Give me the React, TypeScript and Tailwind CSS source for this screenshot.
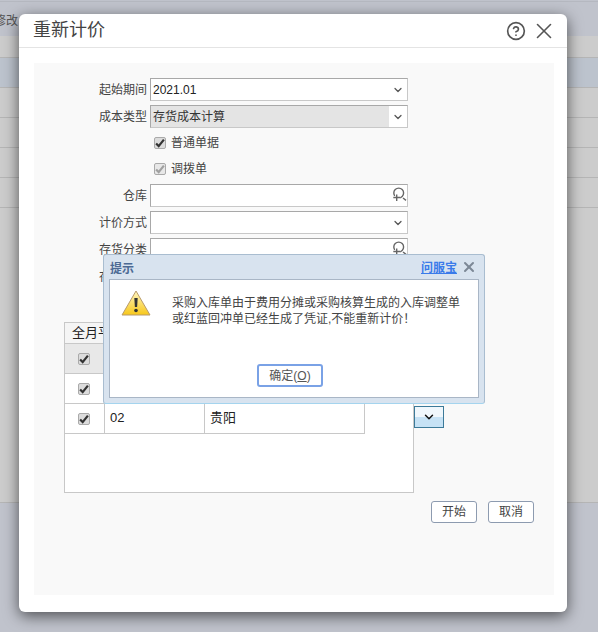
import { HelpCircle, X, ChevronDown } from 'lucide-react'

const cjk = { fontFamily: '"Liberation Sans", "Noto Sans CJK SC", sans-serif' }

const BgRow = ({ className }: { className: string }) => <div className={`border-b border-[#b5b5b5] ${className}`} />

const Chevron = () => <ChevronDown size={12} strokeWidth={2.5} className="text-[#555]" />

const SearchIcon = () => (
  <svg width="16" height="16" viewBox="0 0 16 16" fill="none" stroke="#666" strokeWidth="1.4" className="mt-[-2px]">
    <circle cx="7.7" cy="6" r="4.9" />
    <path d="M12 11l3 2.4" />
    <path d="M5.7 7v7M2.3 10.5h6.8" stroke="#fff" strokeWidth="3" />
    <path d="M5.7 7.5v6.5M2.3 10.5h6.8" />
  </svg>
)

const Tick = ({ disabled }: { disabled?: boolean }) => (
  <span className={`flex h-[12px] w-[12px] items-center justify-center rounded-[2px] border border-[#aaa] ${disabled ? 'bg-[#e8e8e8]' : 'bg-[#dcdcdc]'}`}>
    <svg width="10" height="10" viewBox="0 0 9 9" fill="none" stroke={disabled ? '#a0a0a0' : '#333'} strokeWidth="2">
      <path d="M1 5l2.3 2.3L8 1.5" />
    </svg>
  </span>
)

const Field = ({ label, children }: { label: string; children?: React.ReactNode }) => (
  <div className="flex h-[23px] items-center">
    <div className="w-[113px] pr-[3px] text-right text-[12px] text-[#444]">{label}</div>
    <div className="flex h-[23px] w-[258px] items-center justify-end border border-[#c8c8c8] border-t-[#a8a8a8] border-l-[#a8a8a8] bg-white">
      {children}
    </div>
  </div>
)

const TableRow = ({ code, name, head }: { code?: string; name?: string; head?: boolean }) => (
  <div className={`flex h-[30px] w-[300px] border-b border-[#c8c8c8] ${head ? 'bg-[#e8e8e8]' : 'bg-white'}`}>
    <div className="flex w-[40px] items-center justify-center border-r border-[#c8c8c8] pr-[1px]"><Tick /></div>
    <div className="flex w-[100px] items-center border-r border-[#c8c8c8] pb-[2px] pl-[5px] text-[13px] text-[#222]">{code}</div>
    <div className="flex w-[160px] items-center border-r border-[#c8c8c8] pb-[2px] pl-[5px] text-[13px] text-[#222]">{name}</div>
  </div>
)

export default function App() {
  return (
    <div className="relative h-[632px] w-[598px] overflow-hidden bg-[#c0c3cc]" style={cjk}>
      {/* Page behind the mask */}
      <div className="mt-[1px] border-t border-[#b5b8c0]" />
      <div className="flex flex-col pt-[34px]">
        <div className="relative h-[22px] bg-[#cccccc] border-b border-[#b5b5b5]">
          <span className="absolute left-[-6px] top-[-24px] text-[12px] text-[#555]">修改</span>
        </div>
        <BgRow className="h-[30px] bg-[#bcc3cd]" />
        <BgRow className="h-[30px] bg-[#cccccc]" />
        <BgRow className="h-[30px] bg-[#cccccc]" />
        <BgRow className="h-[30px] bg-[#cccccc]" />
        <BgRow className="h-[30px] bg-[#cccccc]" />
        <div className="h-[295px] bg-[#cccccc] border-b border-[#b5b5b5]" />
      </div>

      {/* Main dialog */}
      <div className="absolute left-[19px] top-[14px] flex h-[598px] w-[548px] flex-col rounded-[6px] bg-white shadow-[0_4px_15px_rgba(0,0,0,0.6)]">
        <div className="flex h-[34px] items-center justify-between border-b border-[#e4e4e4] pl-[14px] pr-[10px]">
          <span className="text-[18px] text-[#444]">重新计价</span>
          <div className="flex items-center gap-[5px]">
            <HelpCircle size={20} strokeWidth={2} className="text-[#555]" />
            <X size={26} strokeWidth={1.5} className="text-[#555]" />
          </div>
        </div>

        <div className="mx-[15px] mt-[15px] h-[532px] w-[520px] bg-[#f9f9f9] pt-[15px] pl-[3px]">
          <div className="flex flex-col gap-[4px]">
            <Field label="起始期间">
              <span className="flex-1 pl-[2px] text-[12px] text-[#222]">2021.01</span>
              <span className="mr-[1px] flex w-[16px] justify-center"><Chevron /></span>
            </Field>
            <Field label="成本类型">
              <span className="flex h-full flex-1 items-center bg-[#e4e4e4] pl-[2px] text-[12px] text-[#333]">存货成本计算</span>
              <span className="flex w-[18px] justify-center"><Chevron /></span>
            </Field>
          </div>
          <div className="mt-[6px] ml-[117px] flex h-[18px] items-center gap-[5px] text-[12px] text-[#444]"><Tick />普通单据</div>
          <div className="mt-[8px] ml-[117px] flex h-[18px] items-center gap-[5px] text-[12px] text-[#444]"><Tick disabled />调拨单</div>
          <div className="mt-[6px] flex flex-col gap-[4px]">
            <Field label="仓库"><SearchIcon /></Field>
            <Field label="计价方式"><span className="mr-[1px] flex w-[16px] justify-center"><Chevron /></span></Field>
            <Field label="存货分类"><SearchIcon /></Field>
            <Field label="存货编码" />
          </div>

          <div className="mt-[34px] ml-[27px] flex items-start">
            <div className="h-[171px] w-[350px] border border-[#c8c8c8] bg-white">
              <div className="flex h-[21px] w-[60px] items-center border-r border-b border-[#c8c8c8] bg-[#f5f5f5] pl-[7px] text-[13px] text-[#222]">全月平均</div>
              <TableRow head />
              <TableRow code="01" name="北京" />
              <TableRow code="02" name="贵阳" />
            </div>
            <div className="mt-[84px] flex h-[22px] w-[30px] items-center justify-center border border-[#3c7a99] bg-[linear-gradient(#f0f7fc_50%,#c6e2f5_50%)]">
              <ChevronDown size={14} strokeWidth={2.5} className="text-[#111]" />
            </div>
          </div>

          <div className="mt-[8px] flex justify-end gap-[11px] pr-[20px]">
            <button className="h-[22px] w-[46px] rounded-[3px] border border-[#8d9bb0] bg-white text-[12px] text-[#444]">开始</button>
            <button className="h-[22px] w-[46px] rounded-[3px] border border-[#8d9bb0] bg-white text-[12px] text-[#444]">取消</button>
          </div>
        </div>
      </div>

      {/* Alert */}
      <div className="absolute left-[103px] top-[254px] flex h-[150px] w-[382px] flex-col rounded-[3px] border border-[#a9bdd0] border-b-[#a4d4ee] bg-[#d8e3ef] px-[5px] pb-[5px]">
        <div className="flex h-[24px] items-center justify-between">
          <span className="pl-[1px] pt-[4px] text-[12px] font-bold text-[#4c6a94]">提示</span>
          <div className="flex items-center gap-[4px] pr-[2px]">
            <span className="pt-[1px] text-[12px] font-bold text-[#3a7bea] underline">问服宝</span>
            <X size={16} strokeWidth={3} className="text-[#7c8896]" />
          </div>
        </div>
        <div className="relative flex-1 border border-[#a9b6c6] bg-white">
          <svg width="30" height="26" viewBox="0 0 30 26" className="absolute left-[11px] top-[10px]">
            <defs>
              <linearGradient id="warn" x1="0" y1="0" x2="0" y2="1">
                <stop offset="0" stopColor="#fff6c0" />
                <stop offset="1" stopColor="#f7c719" />
              </linearGradient>
            </defs>
            <path d="M15 1L29 25H1z" fill="url(#warn)" stroke="#b89a6a" strokeLinejoin="round" />
            <path d="M13.3 8h3.4l-.6 9h-2.2z" fill="#333" />
            <circle cx="15" cy="20.5" r="1.8" fill="#333" />
          </svg>
          <div className="absolute left-[62px] top-[15px] text-[12px] leading-[16px] text-[#444]">
            采购入库单由于费用分摊或采购核算生成的入库调整单
            <br />
            或红蓝回冲单已经生成了凭证,不能重新计价！
          </div>
          <button className="absolute left-[147px] top-[84px] h-[23px] w-[66px] rounded-[3px] border-2 border-[#7aa2e6] bg-white text-[12px] text-[#555]">
            确定(<span className="underline">O</span>)
          </button>
        </div>
      </div>
    </div>
  )
}
